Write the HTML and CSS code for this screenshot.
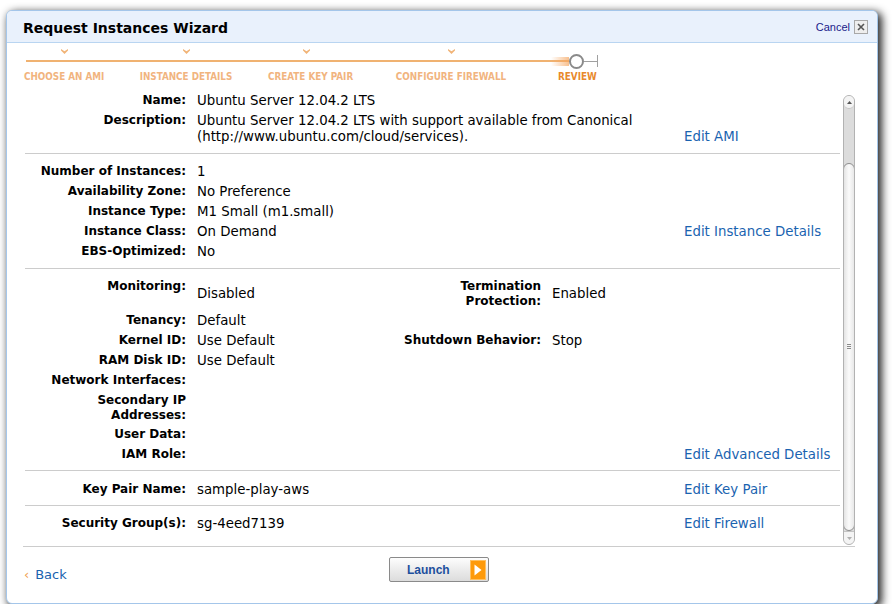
FILE: index.html
```html
<!DOCTYPE html>
<html>
<head>
<meta charset="utf-8">
<title>Request Instances Wizard</title>
<link rel="stylesheet" href="styles.css">
</head>
<body>
<div class="page">
  <div class="dialog">
    <div class="header">
      <h1 class="title">Request Instances Wizard</h1>
      <div class="cancel">
        <a class="cancel-link" href="#">Cancel</a>
        <span class="close"><svg width="8" height="8" viewBox="0 0 8 8"><path d="M1 1 L7 7 M7 1 L1 7" stroke="#555" stroke-width="1.6"/></svg></span>
      </div>
    </div>

    <div class="progress">
      <div class="steps">
        <span class="step-cell"><svg class="check" width="7" height="6" viewBox="0 0 7 6"><path d="M0 1 L3.5 3.2 L7 1 L7 2.5 L3.5 6 L0 2.5 Z" fill="#f1b478"/></svg></span>
        <span class="step-cell"><svg class="check" width="7" height="6" viewBox="0 0 7 6"><path d="M0 1 L3.5 3.2 L7 1 L7 2.5 L3.5 6 L0 2.5 Z" fill="#f1b478"/></svg></span>
        <span class="step-cell"><svg class="check" width="7" height="6" viewBox="0 0 7 6"><path d="M0 1 L3.5 3.2 L7 1 L7 2.5 L3.5 6 L0 2.5 Z" fill="#f1b478"/></svg></span>
        <span class="step-cell"><svg class="check" width="7" height="6" viewBox="0 0 7 6"><path d="M0 1 L3.5 3.2 L7 1 L7 2.5 L3.5 6 L0 2.5 Z" fill="#f1b478"/></svg></span>
        <span class="step-cell"></span>
      </div>
      <div class="track">
        <span class="done-line"></span>
        <span class="current"></span>
        <span class="todo-line"></span>
        <span class="tick"></span>
      </div>
      <div class="steps labels">
        <span class="step-label">CHOOSE AN AMI</span>
        <span class="step-label">INSTANCE DETAILS</span>
        <span class="step-label">CREATE KEY PAIR</span>
        <span class="step-label">CONFIGURE FIREWALL</span>
        <span class="step-label active">REVIEW</span>
      </div>
    </div>

    <div class="main">
      <div class="content">
        <div class="section first">
          <div class="row"><div class="lbl">Name:</div><div class="val wide">Ubuntu Server 12.04.2 LTS</div></div>
          <div class="row"><div class="lbl">Description:</div><div class="val wide">Ubuntu Server 12.04.2 LTS with support available from Canonical (http://www.ubuntu.com/cloud/services).</div><a class="edit" href="#">Edit AMI</a></div>
        </div>
        <div class="section">
          <div class="row"><div class="lbl">Number of Instances:</div><div class="val wide">1</div></div>
          <div class="row"><div class="lbl">Availability Zone:</div><div class="val wide">No Preference</div></div>
          <div class="row"><div class="lbl">Instance Type:</div><div class="val wide">M1 Small (m1.small)</div></div>
          <div class="row"><div class="lbl">Instance Class:</div><div class="val wide">On Demand</div><a class="edit" href="#">Edit Instance Details</a></div>
          <div class="row"><div class="lbl">EBS-Optimized:</div><div class="val wide">No</div></div>
        </div>
        <div class="section advanced">
          <div class="row"><div class="lbl">Monitoring:</div><div class="val">Disabled</div><div class="lbl lbl2">Termination Protection:</div><div class="val">Enabled</div></div>
          <div class="row"><div class="lbl">Tenancy:</div><div class="val">Default</div></div>
          <div class="row"><div class="lbl">Kernel ID:</div><div class="val">Use Default</div><div class="lbl lbl2">Shutdown Behavior:</div><div class="val">Stop</div></div>
          <div class="row"><div class="lbl">RAM Disk ID:</div><div class="val">Use Default</div></div>
          <div class="row"><div class="lbl">Network Interfaces:</div><div class="val"></div></div>
          <div class="row"><div class="lbl">Secondary IP Addresses:</div><div class="val"></div></div>
          <div class="row"><div class="lbl">User Data:</div><div class="val"></div></div>
          <div class="row"><div class="lbl">IAM Role:</div><div class="val"></div><a class="edit" href="#">Edit Advanced Details</a></div>
        </div>
        <div class="section keypair">
          <div class="row"><div class="lbl">Key Pair Name:</div><div class="val wide">sample-play-aws</div><a class="edit" href="#">Edit Key Pair</a></div>
        </div>
        <div class="section last">
          <div class="row"><div class="lbl">Security Group(s):</div><div class="val wide">sg-4eed7139</div><a class="edit" href="#">Edit Firewall</a></div>
        </div>
      </div>
      <div class="sb">
        <div class="sb-up"><svg width="5" height="3" viewBox="0 0 5 3"><path d="M0 3 L2.5 0 L5 3 Z" fill="#555"/></svg></div>
        <div class="sb-track"></div>
        <div class="sb-thumb"><span class="grip"></span></div>
        <div class="sb-down"><svg width="5" height="3" viewBox="0 0 5 3"><path d="M0 0 L2.5 3 L5 0 Z" fill="#b0b0b0"/></svg></div>
      </div>
    </div>

    <div class="footer">
      <a class="back" href="#"><span class="chev">‹</span>Back</a>
      <button class="launch" type="button">
        <span class="launch-text">Launch</span>
        <span class="launch-icon"><svg width="8" height="12" viewBox="0 0 8 12"><path d="M0.5 0.5 L7.5 6 L0.5 11.5 Z" fill="#fff"/></svg></span>
      </button>
    </div>
  </div>
</div>
</body>
</html>
```

FILE: styles.css
```css
* { box-sizing: border-box; }

body {
  margin: 0;
  background: #ffffff;
  font-family: "DejaVu Sans", Verdana, sans-serif;
  color: #000;
}

.page {
  padding: 10px 0 0 6px;
}

.dialog {
  width: 872px;
  height: 594px;
  border: 1px solid #a4c6ea;
  border-radius: 6px;
  background: #fff;
  box-shadow: 3px 3px 8px 1px rgba(0, 0, 0, 0.85);
  display: flex;
  flex-direction: column;
  overflow: hidden;
}

/* header */
.header {
  height: 32px;
  flex: none;
  background: #e9f1fc;
  border-bottom: 1px solid #b9d5f1;
  display: flex;
  align-items: center;
  justify-content: space-between;
  padding: 2px 9px 0 16px;
}

.title {
  margin: 0;
  font-size: 14px;
  font-weight: bold;
  color: #000;
}

.cancel {
  display: flex;
  align-items: center;
  gap: 4px;
  margin-top: -1px;
}

.cancel-link {
  font-family: "Liberation Sans", Arial, sans-serif;
  font-size: 11px;
  color: #1a1a8a;
  text-decoration: none;
}

.close {
  width: 14px;
  height: 14px;
  border: 1px solid #a8a8a8;
  background: #eeeeee;
  display: flex;
  align-items: center;
  justify-content: center;
}

/* progress */
.progress {
  height: 45px;
  flex: none;
  padding: 4px 0 0 17px;
}

.steps {
  display: grid;
  grid-template-columns: 80px 164px 76px 214px 36px;
}

.step-cell {
  height: 7px;
  display: flex;
  justify-content: center;
  align-items: flex-end;
}

.check { display: block; }

.track {
  margin-left: 2px;
  height: 14px;
  display: flex;
  align-items: center;
}

.done-line {
  width: 543px;
  height: 14px;
  background:
    linear-gradient(to right, rgba(245, 170, 100, 0), rgba(245, 165, 95, 0.7)) right center / 18px 9px no-repeat,
    linear-gradient(#f0b271, #f0b271) left center / 100% 2px no-repeat;
}

.current {
  width: 15px;
  height: 15px;
  border: 2px solid #8a8a8a;
  border-radius: 50%;
  background: #fff;
  flex: none;
}

.todo-line {
  width: 13px;
  height: 1px;
  background: #a0a0a0;
}

.tick {
  width: 1px;
  height: 12px;
  background: #a0a0a0;
}

.labels {
  margin-top: 3px;
}

.step-label {
  text-align: center;
  font-family: "DejaVu Sans Condensed", "Liberation Sans Narrow", "Liberation Sans", sans-serif;
  font-weight: bold;
  font-size: 9.8px;
  line-height: 12px;
  color: #f1b47f;
  white-space: nowrap;
}

.step-label.active {
  color: #e8892c;
}

/* main */
.main {
  margin: 0 22px 0 16px;
  height: 459px;
  flex: none;
  border-bottom: 1px solid #cccccc;
  display: flex;
  overflow: hidden;
}

.content {
  width: 817px;
  flex: none;
  padding: 2px 0 0 2px;
}

.section {
  padding: 7px 0;
  border-bottom: 1px solid #cccccc;
}

.section.first { padding-top: 0; }
.section.advanced { padding-bottom: 6px; }
.section.keypair { padding-top: 8px; padding-bottom: 6px; }
.section.last { border-bottom: none; }

.row {
  display: grid;
  grid-template-columns: 161px 187px 146px 121px 156px;
  column-gap: 11px;
  min-height: 20px;
  padding: 3px 0 1px;
}

.lbl {
  grid-column: 1;
  text-align: right;
  font-weight: bold;
  font-size: 12px;
  line-height: 15px;
  align-self: start;
  color: #000;
}

.lbl2 { grid-column: 3; }

.val {
  font-size: 13.33px;
  line-height: 16px;
  align-self: center;
  color: #000;
}

.wide { grid-column: 2 / 5; }

.edit {
  grid-column: 5;
  align-self: end;
  font-size: 13.33px;
  line-height: 16px;
  color: #1a63b0;
  text-decoration: none;
  white-space: nowrap;
}

/* scrollbar */
.sb {
  width: 12px;
  flex: none;
  margin: 7px 0 1px 3px;
  display: flex;
  flex-direction: column;
  border: 1px solid #b2b2b2;
  border-radius: 6px;
  background: #dcdcdc;
  overflow: hidden;
}

.sb-up, .sb-down {
  height: 13px;
  flex: none;
  background: #f4f4f4;
  display: flex;
  align-items: center;
  justify-content: center;
}

.sb-up { border-bottom: 1px solid #c4c4c4; border-radius: 0 0 5px 5px; }
.sb-down { border-top: 1px solid #c4c4c4; }

.sb-track {
  height: 54px;
  flex: none;
}

.sb-thumb {
  flex: 1;
  margin: 0 -1px;
  border: 1px solid #8e8e8e;
  border-radius: 6px;
  background: linear-gradient(to right, #e4e4e4, #fbfbfb 50%, #e8e8e8);
  display: flex;
  align-items: center;
  justify-content: center;
}

.grip {
  width: 4px;
  height: 6px;
  background: repeating-linear-gradient(#8a8a8a 0 1px, transparent 1px 2px);
}

/* footer */
.footer {
  flex: 1;
  display: flex;
  align-items: center;
  padding: 0 0 11px 17px;
}

.back {
  font-size: 13px;
  color: #1a63b0;
  text-decoration: none;
  margin-top: 9px;
  width: 42px;
  white-space: nowrap;
}

.chev {
  color: #f0a050;
  margin-right: 6px;
}

.launch {
  margin-left: 323px;
  width: 100px;
  height: 25px;
  border: 1px solid #8a8a8a;
  border-radius: 2px;
  background: linear-gradient(#fdfdfd, #ececec 50%, #dcdcdc);
  display: flex;
  align-items: center;
  justify-content: space-between;
  padding: 0 2px 0 17px;
  font-family: "Liberation Sans", Arial, sans-serif;
  font-size: 12px;
  font-weight: bold;
  color: #1d4f9d;
  cursor: pointer;
}

.launch-icon {
  width: 16px;
  height: 20px;
  background: #fe9a0a;
  border: 1px solid #ffc060;
  display: flex;
  align-items: center;
  justify-content: center;
}
```
